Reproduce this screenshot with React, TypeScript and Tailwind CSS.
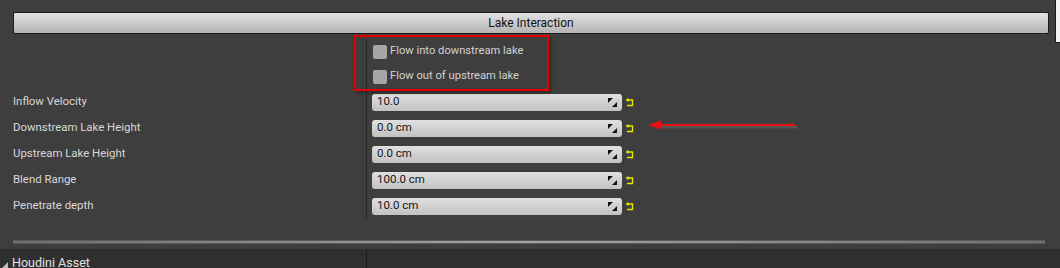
const rows = [
  { label: "Inflow Velocity", value: "10.0" },
  { label: "Downstream Lake Height", value: "0.0 cm" },
  { label: "Upstream Lake Height", value: "0.0 cm" },
  { label: "Blend Range", value: "100.0 cm" },
  { label: "Penetrate depth", value: "10.0 cm" },
];

const toggles = ["Flow into downstream lake", "Flow out of upstream lake"];

function DragIcon() {
  return (
    <svg width="9" height="9" viewBox="0 0 9 9" className="shrink-0">
      <polygon points="0,0 5,0 0,5" fill="#111" />
      <polygon points="9,4 9,9 4,9" fill="#111" />
    </svg>
  );
}

function ResetIcon() {
  return (
    <svg width="9" height="9" viewBox="0 0 9 9" className="shrink-0">
      <path d="M3 2 H7.5 V7.5 H2" stroke="#e8e800" strokeWidth="1.3" fill="none" />
      <polygon points="0.5,2 3.5,0 3.5,4" fill="#e8e800" />
    </svg>
  );
}

export default function App() {
  return (
    <div className="relative w-[1060px] h-[268px] overflow-hidden bg-[#3e3e3e] font-['Roboto',sans-serif]">
      <div className="flex">
        <div className="flex-1">
          <div className="ml-[13px] mr-[6px] mt-[12px] h-[22px] flex items-center justify-center border border-[#1c1c1c] rounded-[2px] bg-gradient-to-b from-[#e2e2e2] to-[#b4b4b4] text-[12px] text-[#141414]">
            Lake Interaction
          </div>

          <div className="mt-[5px] grid grid-cols-[366px_1fr]">
            {toggles.map((t) => (
              <div key={t} className="contents">
                <div className="h-[25px]" />
                <div className="h-[25px] flex items-center pl-[6px] gap-[3px] border-l border-[#262626] text-[11.2px] text-[#d2d2d2]">
                  <span className="w-[14px] h-[14px] rounded-[2px] bg-[#a6a6a6]" />
                  {t}
                </div>
              </div>
            ))}
            {rows.map((r) => (
              <div key={r.label} className="contents">
                <div className="h-[26px] flex items-center pl-[13px] text-[11.4px] text-[#d8d8d8]">{r.label}</div>
                <div className="h-[26px] flex items-center pl-[5px] gap-[3px] border-l border-[#262626]">
                  <div className="w-[250px] h-[17px] flex items-center justify-between pl-[5px] pr-[5px] rounded-[3px] bg-gradient-to-b from-[#e0e0e0] to-[#c2c2c2] text-[11.5px] text-[#161616]">
                    <span>{r.value}</span>
                    <DragIcon />
                  </div>
                  <ResetIcon />
                </div>
              </div>
            ))}
          </div>

          <div className="mt-[21px] ml-[13px] mr-[10px] h-[4px] border-y border-[#5a5a5a] bg-gradient-to-r from-[#6e6e6e] via-[#a4a4a4] to-[#707070]" />
          <div className="h-[5px]" />
        </div>
        <div className="w-[5px]">
          <div className="h-[43px] bg-[#f4f4f4] border-l border-b border-[#1a1a1a]" />
        </div>
      </div>

      <div className="grid grid-cols-[366px_1fr] bg-[#2f2f2f] h-[20px]">
        <div className="flex items-end gap-[4px] pl-[2px] text-[12.5px] text-[#e2e2e2] leading-none pt-[7px]">
          <svg width="6" height="6" viewBox="0 0 6 6" className="mb-[1px]">
            <polygon points="6,0 6,6 0,6" fill="#bdbdbd" />
          </svg>
          Houdini Asset
        </div>
        <div className="border-l border-[#1c1c1c]" />
      </div>

      <div className="absolute left-[354px] top-[35px] w-[195px] h-[56px] border-2 border-[#e40000] shadow-[2px_2px_3px_rgba(0,0,0,0.35)]" />

      <svg className="absolute left-[646px] top-[118px]" width="156" height="16" viewBox="0 0 156 16">
        <line x1="12" y1="9" x2="151" y2="9" stroke="#555" strokeWidth="3" />
        <line x1="12" y1="7" x2="149" y2="7" stroke="#e81010" strokeWidth="2" />
        <polygon points="2,7 15,2.5 15,11.5" fill="#e81010" />
      </svg>
    </div>
  );
}
